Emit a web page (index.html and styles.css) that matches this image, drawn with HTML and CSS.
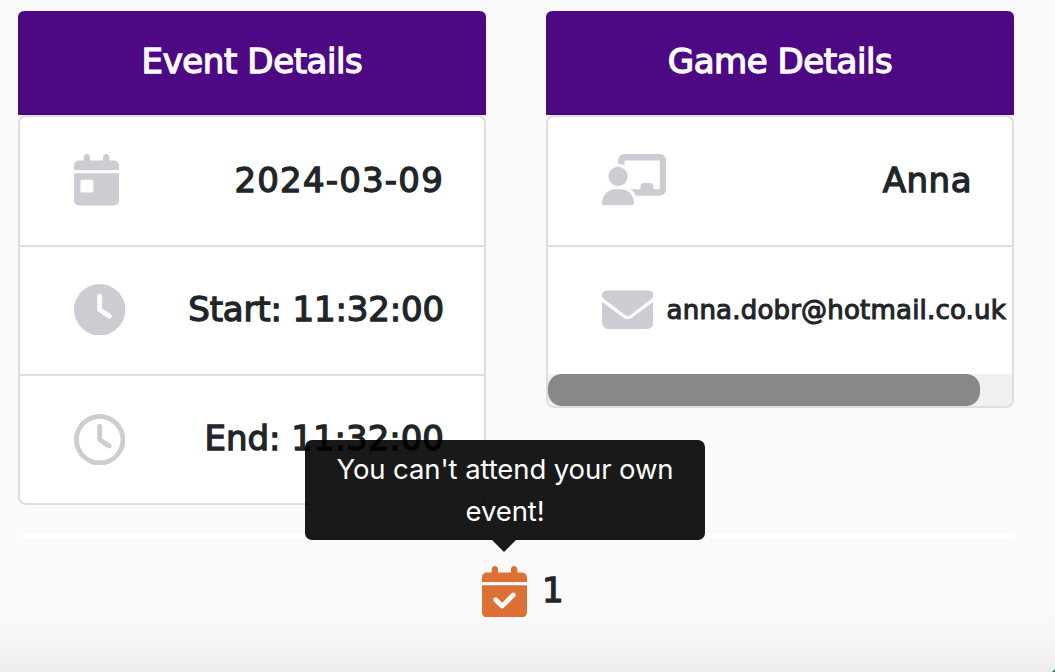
FILE: index.html
```
<!DOCTYPE html>
<html lang="en">
<head>
<meta charset="utf-8">
<title>Event Details</title>
<link rel="stylesheet" href="styles.css">
</head>
<body>
<main class="page">
  <div class="columns">
    <section class="card">
      <h2 class="card-header"><span class="t-event">Event Details</span></h2>
      <ul class="list">
        <li class="row">
          <svg class="icon" width="45" height="51.4" viewBox="0 0 448 512"><path d="M128 0c17.7 0 32 14.3 32 32V64H288V32c0-17.7 14.3-32 32-32s32 14.3 32 32V64h48c26.5 0 48 21.5 48 48v48H0V112C0 85.5 21.5 64 48 64H96V32c0-17.7 14.3-32 32-32zM0 192H448V464c0 26.5-21.5 48-48 48H48c-26.5 0-48-21.5-48-48V192zm80 64c-8.8 0-16 7.2-16 16v96c0 8.8 7.2 16 16 16h96c8.8 0 16-7.2 16-16V272c0-8.8-7.2-16-16-16H80z"/></svg>
          <span class="value t-date">2024-03-09</span>
        </li>
        <li class="row">
          <svg class="icon" width="51.4" height="51.4" viewBox="0 0 512 512"><path d="M256 0a256 256 0 1 1 0 512A256 256 0 1 1 256 0zM232 120V256c0 8 4 15.5 10.7 20l96 64c11 7.4 25.9 4.4 33.3-6.7s4.4-25.9-6.7-33.3L280 243.2V120c0-13.3-10.7-24-24-24s-24 10.7-24 24z"/></svg>
          <span class="value t-start">Start: 11:32:00</span>
        </li>
        <li class="row">
          <svg class="icon" width="51.4" height="51.4" viewBox="0 0 512 512"><path d="M464 256A208 208 0 1 1 48 256a208 208 0 1 1 416 0zM0 256a256 256 0 1 0 512 0A256 256 0 1 0 0 256zM232 120V256c0 8 4 15.5 10.7 20l96 64c11 7.4 25.9 4.4 33.3-6.7s4.4-25.9-6.7-33.3L280 243.2V120c0-13.3-10.7-24-24-24s-24 10.7-24 24z"/></svg>
          <span class="value t-end">End: 11:32:00</span>
        </li>
      </ul>
    </section>
    <section class="card">
      <h2 class="card-header"><span class="t-game">Game Details</span></h2>
      <ul class="list">
        <li class="row">
          <svg class="icon" width="64.2" height="51.4" viewBox="0 0 640 512"><path d="M160 64c0-35.3 28.7-64 64-64H576c35.3 0 64 28.7 64 64V352c0 35.3-28.7 64-64 64H336.8c-11.8-25.5-29.9-47.5-52.4-64H384V320c0-17.7 14.3-32 32-32h64c17.7 0 32 14.3 32 32v32h64V64L224 64v49.1C205.2 102.2 183.3 96 160 96V64zm0 64a96 96 0 1 1 0 192 96 96 0 1 1 0-192zM133.3 352h53.3C260.3 352 320 411.7 320 485.3c0 14.7-11.9 26.7-26.7 26.7H26.7C11.9 512 0 500.1 0 485.3C0 411.7 59.7 352 133.3 352z"/></svg>
          <span class="value t-name">Anna</span>
        </li>
        <li class="row row-email">
          <svg class="icon" width="51.4" height="51.4" viewBox="0 0 512 512"><path d="M48 64C21.5 64 0 85.5 0 112c0 15.1 7.1 29.3 19.2 38.4L236.8 313.6c11.4 8.5 27 8.5 38.4 0L492.8 150.4c12.1-9.1 19.2-23.3 19.2-38.4c0-26.5-21.5-48-48-48H48zM0 176V384c0 35.3 28.7 64 64 64H448c35.3 0 64-28.7 64-64V176L294.4 339.2c-22.8 17.1-54 17.1-76.8 0L0 176z"/></svg>
          <span class="value t-email">anna.dobr@hotmail.co.uk</span>
        </li>
        <li class="scrollbar"><div class="thumb"></div></li>
      </ul>
    </section>
  </div>
  <hr class="rule">
  <div class="attendance">
    <div class="attend">
      <svg class="attend-icon" width="45" height="51.4" viewBox="0 0 448 512"><path d="M128 0c17.7 0 32 14.3 32 32V64H288V32c0-17.7 14.3-32 32-32s32 14.3 32 32V64h48c26.5 0 48 21.5 48 48v48H0V112C0 85.5 21.5 64 48 64H96V32c0-17.7 14.3-32 32-32zM0 192H448V464c0 26.5-21.5 48-48 48H48c-26.5 0-48-21.5-48-48V192zM329 305c9.4-9.4 9.4-24.6 0-33.9s-24.6-9.4-33.9 0l-95 95-47-47c-9.4-9.4-24.6-9.4-33.9 0s-9.4 24.6 0 33.9l64 64c9.4 9.4 24.6 9.4 33.9 0L329 305z"/></svg>
      <div class="tooltip" role="tooltip">You can't attend your own event!</div>
    </div>
    <span class="count">1</span>
  </div>
  <div class="corner"></div>
</main>
</body>
</html>
```
FILE: styles.css
```
* { box-sizing: border-box; }

body {
  margin: 0;
  color: #212529;
  font-family: "DejaVu Sans", sans-serif;
}

.page {
  position: relative;
  height: 672px;
  padding: 11px 41px 0 18px;
  overflow: hidden;
  background: linear-gradient(#fafafa 0, #fafafa 600px, #f7f7f7 636px, #ededed 672px);
}

.columns {
  display: flex;
  align-items: flex-start;
  gap: 60px;
}

.card { width: 468px; }

.card-header {
  display: flex;
  justify-content: center;
  height: 104px;
  margin: 0;
  border-bottom: 2px solid #450776;
  border-radius: 6px 6px 0 0;
  background: #4d0983;
  color: #fafafa;
  font-size: 34px;
  font-weight: 400;
  line-height: 101px;
  white-space: nowrap;
  -webkit-text-stroke: 1.3px currentColor;
}

.list {
  margin: 0;
  padding: 0;
  overflow: hidden;
  list-style: none;
  border: 2px solid #dedede;
  border-radius: 8px;
  background: #fff;
}

.row {
  display: flex;
  align-items: center;
  justify-content: space-between;
  height: 129px;
  padding: 0 40px 2px 54px;
  border-bottom: 2px solid #dedede;
}

.row:first-child { height: 130px; }

.row:last-child {
  height: 127px;
  padding-bottom: 0;
  border-bottom: 0;
}

.row.row-email {
  height: 127px;
  padding-right: 6px;
  border-bottom: 0;
}

.icon {
  flex: none;
  fill: #cdccd2;
}

.value {
  padding-bottom: 2px;
  font-size: 34px;
  line-height: 40px;
  white-space: nowrap;
  -webkit-text-stroke: 1.3px currentColor;
}

.t-event { letter-spacing: -0.4px; }
.t-game { letter-spacing: -0.45px; }

.t-date {
  padding-bottom: 1px;
  letter-spacing: 1.2px;
}

.t-start { letter-spacing: -0.15px; }

.t-end {
  padding-bottom: 4px;
  letter-spacing: 0;
}

.t-name {
  padding-bottom: 0;
  letter-spacing: 0.5px;
}

.t-email {
  padding-bottom: 0;
  font-size: 26px;
  letter-spacing: 0.2px;
  -webkit-text-stroke-width: 1.1px;
}

.scrollbar {
  height: 32px;
  background: #f0f0f0;
}

.thumb {
  width: 432px;
  height: 32px;
  border-radius: 14px;
  background: #888;
}

.rule {
  height: 2px;
  margin: 30px -1px 0 0;
  border: 0;
  background: #fff;
}

.attendance {
  display: flex;
  gap: 15px;
  padding: 29px 0 0 464px;
}

.attend {
  position: relative;
  height: 52px;
}

.attend-icon {
  display: block;
  fill: #dc7035;
}

.count {
  font-size: 34px;
  line-height: 48px;
  -webkit-text-stroke: 1.3px currentColor;
}

.tooltip {
  position: absolute;
  bottom: 78px;
  left: -177px;
  width: 400px;
  height: 100px;
  padding: 8px 16px;
  border-radius: 7px;
  background: rgba(0, 0, 0, 0.9);
  color: #fff;
  font-family: Inter, sans-serif;
  font-size: 27.5px;
  letter-spacing: -0.1px;
  line-height: 42px;
  text-align: center;
}

.tooltip::after {
  content: "";
  position: absolute;
  top: 100px;
  left: 187px;
  border: 12px solid transparent;
  border-top-color: rgba(0, 0, 0, 0.9);
  border-bottom: 0;
}

.corner {
  position: absolute;
  right: 0;
  bottom: 0;
  width: 3px;
  height: 3px;
  background: #2b7d65;
  clip-path: polygon(100% 0, 100% 100%, 0 100%);
}
```
